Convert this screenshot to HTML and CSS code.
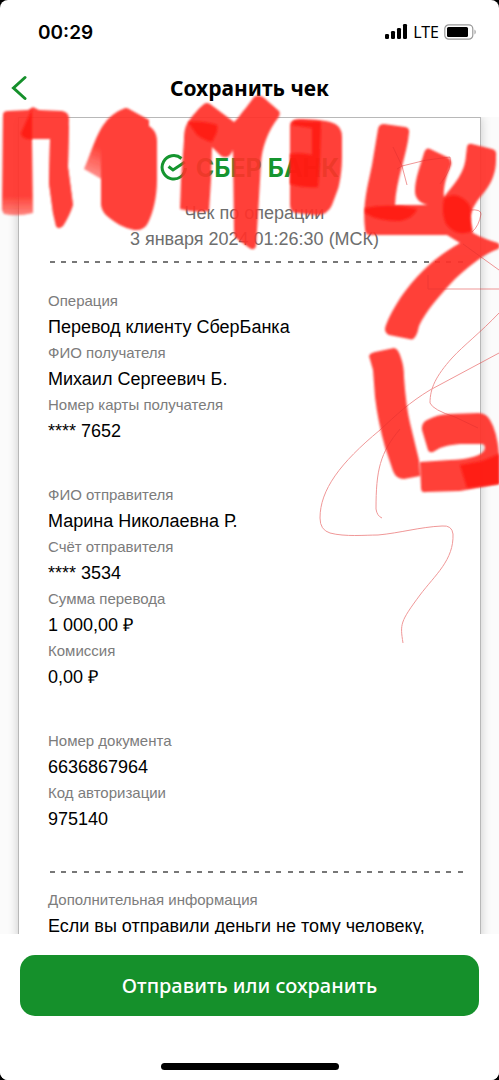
FILE: index.html
```
<!DOCTYPE html>
<html lang="ru">
<head>
  <meta charset="UTF-8">
  <meta name="viewport" content="width=device-width, initial-scale=1.0">
  <title>Сохранить чек</title>
  <link rel="stylesheet" href="styles.css">
</head>
<body>
  <div class="screen">
    <div class="statusbar">
      <span class="time">00:29</span>
      <div class="indicators">
        <svg width="23" height="16" viewBox="0 0 23 16">
          <rect x="0" y="10" width="4" height="5" rx="1.3"/>
          <rect x="6" y="7" width="4" height="8" rx="1.3"/>
          <rect x="12" y="4" width="4" height="11" rx="1.3"/>
          <rect x="18" y="0" width="4" height="15" rx="1.3"/>
        </svg>
        <span class="network">LTE</span>
        <svg width="33" height="16" viewBox="0 0 33 16">
          <rect x="0.8" y="0.8" width="28" height="14.4" rx="4" fill="none" stroke="#999" stroke-width="1.2"/>
          <rect x="3" y="3" width="21" height="10" rx="1.5"/>
          <path d="M30.5 5.5c1.6.8 1.6 4.2 0 5z" fill="#999"/>
        </svg>
      </div>
    </div>

    <header class="header">
      <button class="back" aria-label="Назад">
        <svg width="16" height="26" viewBox="0 0 16 26">
          <path d="M14 2.5 2.5 13 14 23.5" fill="none" stroke="#15902b" stroke-width="3" stroke-linecap="round"/>
        </svg>
      </button>
      <h1>Сохранить чек</h1>
    </header>

    <main class="preview">
      <article class="receipt">
        <div class="logo">
          <svg width="28" height="28" viewBox="0 0 28 28" fill="none" stroke="#15952f" stroke-width="3">
            <path d="M21.5 4.5A11.7 11.7 0 1 0 25.5 14"/>
            <path d="M8.5 12.5 13 16 25 8"/>
          </svg>
          <span>СБЕР БАНК</span>
        </div>
        <p class="caption">Чек по операции</p>
        <p class="caption">3 января 2024 01:26:30 (МСК)</p>
        <div class="divider"></div>

        <dl class="group">
          <dt>Операция</dt>
          <dd>Перевод клиенту СберБанка</dd>
          <dt>ФИО получателя</dt>
          <dd>Михаил Сергеевич Б.</dd>
          <dt>Номер карты получателя</dt>
          <dd>**** 7652</dd>
        </dl>
        <dl class="group">
          <dt>ФИО отправителя</dt>
          <dd>Марина Николаевна Р.</dd>
          <dt>Счёт отправителя</dt>
          <dd>**** 3534</dd>
          <dt>Сумма перевода</dt>
          <dd>1 000,00 ₽</dd>
          <dt>Комиссия</dt>
          <dd>0,00 ₽</dd>
        </dl>
        <dl class="group">
          <dt>Номер документа</dt>
          <dd>6636867964</dd>
          <dt>Код авторизации</dt>
          <dd>975140</dd>
        </dl>
        <div class="divider"></div>
        <dl class="group extra">
          <dt>Дополнительная информация</dt>
          <dd>Если вы отправили деньги не тому человеку,</dd>
        </dl>
      </article>
    </main>

    <footer class="footer">
      <button class="save">Отправить или сохранить</button>
      <div class="home-bar"></div>
    </footer>

    <!-- marker drawing over the receipt -->
    <svg class="marker" viewBox="0 0 499 660">
      <defs>
        <filter id="soft" x="-5%" y="-5%" width="110%" height="110%">
          <feGaussianBlur stdDeviation="0.8"/>
        </filter>
        <linearGradient id="fade" gradientUnits="userSpaceOnUse" x1="0" y1="196" x2="0" y2="217">
          <stop offset="0" stop-color="#ff3329"/>
          <stop offset="1" stop-color="#ff3329" stop-opacity="0.6"/>
        </linearGradient>
        <linearGradient id="flare" gradientUnits="userSpaceOnUse" x1="84" y1="172" x2="94" y2="145">
          <stop offset="0" stop-color="#ff3329" stop-opacity="0.6"/>
          <stop offset="1" stop-color="#ff3329"/>
        </linearGradient>
      </defs>
      <g class="ink" filter="url(#soft)">
        <path d="M3 115Q3 111 8 111L28 110 33 107 39 110 62 111Q69 112 69 119L68 167 73 205Q69 217 63 226 58 230 56 226L53 213 49 183 50 139H32L33 213Q18 217 4 214L2 210Z" fill="url(#fade)"/>
        <path d="M49 183 50 139 69 125 68 167 73 205Q69 217 63 226 58 230 56 226L53 213Z"/>
        <path d="M84 169C92 150 96 135 104 124L103 180Z" fill="url(#flare)"/>
        <path d="M103 126C108 117 117 111 123 109Q126 107 129 109L149 120V126C154 129 157 134 157 141V180C157 197 153 213 148 223Q144 231 134 230C124 228 115 223 107 216Q102 212 101 205V140Z"/>
        <path d="M188 122C193 115 199 108 204 104Q207 102 210 104L234 122C239 118 241 113 245 109L254 97Q258 94 263 97L279 111Q281 114 278 118C268 131 262 147 261 163L258 215 256 246Q254 252 248 247L236 238Q234 236 234 230L233 150C230 157 226 159 221 156L212 147 211 180 209 211Q194 213 180 209L181 180 184 140C184 132 185 127 188 122Z"/>
        <path d="M290 125Q290 120 298 119C312 119 322 120 330 122Q342 125 342 137V157C342 170 340 182 338 189L332 205Q328 215 316 215L296 213Q290 212 290 205Z"/>
        <path d="M378 129Q379 124 384 124L405 127Q410 128 409 133C407 155 396 180 395 205H428Q415 202 415 191C415 178 421 164 424 153Q426 147 430 149L449 158Q452 161 451 165C446 177 443 188 444 197C453 185 465 174 466 155L467 147Q468 143 472 144L492 149Q497 150 496 156C497 182 484 191 476 203C469 212 470 224 473 233Q484 239 498 243 501 246 498 249C485 253 468 267 455 279C439 296 426 311 419 326Q416 342 409 339L389 335Q383 332 386 325C396 300 420 265 460 243L447 235H370Q365 235 365 229C362 205 368 185 372 165Z"/>
        <path d="M369 356Q370 353 375 352L394 348Q398 348 401 358 404 366 404 377 406 406 410 423L419 460 420 476 404 479Q396 479 393 471L385 447Q378 422 375 397L373 370Z"/>
        <path fill-rule="evenodd" d="M422 430Q421 423 427 420 438 414 450 414L479 413Q487 414 490 420 497 431 499 454V484L460 491 426 492Q421 493 421 488L420 462 450 460Q475 459 483 452 487 447 483 444L460 444Q447 445 440 448L433 452Q429 453 428 450Z"/>
      </g>
      <g class="deep" filter="url(#soft)">
        <path d="M21 133 32 109 32 139Q22 140 21 133Z"/>
        <path d="M188 122Q202 120 217 125 219 130 212 142 206 141 197 135Z"/>
        <path d="M290 154Q300 152 312 155V128L292 125 294 121 321 122 320 160 318 187Q303 188 290 184Z"/>
        <path d="M365 208Q390 203 417 209 414 218 400 221 377 221 365 213Z"/>
        <path d="M444 199Q454 191 465 200 473 207 470 215L472 231Q457 238 446 224 441 212 444 199Z"/>
        <path d="M460 465 482 461 499 454V484L467 488Z"/>
      </g>
      <g class="hairlines">
        <path d="M393 147 402 166 407 185M397 169 402 166Q425 159 450 157 453 168 440 184M470 210Q481 209 481 214 479 226 472 232M463 244 499 270M428 275 428 289H499"/>
        <path d="M499 313C480 333 464 345 452 358C436 376 430 388 430 403Q433 410 455 417L478 428"/>
        <path d="M499 353 430 390C410 402 396 415 380 430C340 463 320 490 320 518Q320 530 330 533C345 537 365 535 378 535C400 533 420 527 442 526Q452 525 453 534C454 560 435 575 420 595C400 622 400 624 403 643"/>
        <path d="M400 429C380 453 376 470 376 509Q377 516 382 518"/>
      </g>
    </svg>
  </div>
</body>
</html>
```
FILE: styles.css
```
* {
  box-sizing: border-box;
}
body {
  margin: 0;
  background: #000;
  color: #000;
  font-family: "Liberation Sans", Arial, sans-serif;
}
button {
  border: none;
  padding: 0;
  cursor: pointer;
}
.screen {
  position: relative;
  display: flex;
  flex-direction: column;
  height: 100vh;
  background: #fff;
  border-radius: 8px;
  overflow: hidden;
}

/* status bar */
.statusbar {
  display: flex;
  justify-content: space-between;
  align-items: center;
  height: 64px;
  padding: 0 22px 0 38px;
  flex-shrink: 0;
}
.time {
  font: 600 19px Inter, sans-serif;
}
.indicators {
  display: flex;
  align-items: center;
  gap: 5px;
}
.network {
  font: 400 16px "Noto Sans", sans-serif;
}

/* header */
.header {
  display: grid;
  grid-template-columns: 40px 1fr 40px;
  align-items: center;
  height: 53px;
  padding-bottom: 5px;
  flex-shrink: 0;
}
.back {
  display: flex;
  padding-left: 11px;
  background: none;
}
.header h1 {
  margin: 0;
  text-align: center;
  font: 700 21px "Noto Sans", sans-serif;
}

/* receipt */
.preview {
  flex: 1;
  min-height: 0;
  overflow: hidden;
  padding: 0 18px;
  background: #fbfbfb;
}
.receipt {
  min-height: 100%;
  padding: 32px 17px 0 29px;
  background: #fff;
  border: 1px solid #b8b8b8;
  box-shadow: 0 0 10px rgba(0, 0, 0, 0.2);
}
.logo {
  display: flex;
  justify-content: center;
  align-items: center;
  gap: 8px;
  height: 36px;
  margin-bottom: 14px;
  padding-right: 12px;
  color: #15952f;
  font: 700 25px Inter, sans-serif;
}
.caption {
  margin: 0;
  padding-right: 2px;
  text-align: center;
  font-size: 18px;
  line-height: 26px;
  color: #6e6e6e;
}
.divider {
  height: 2px;
  margin: 9px 0 26px 2px;
  background: repeating-linear-gradient(90deg, #777 0 5px, transparent 5px 11px, #777 11px 16px, transparent 16px 22px, #777 22px 27px, transparent 27px 34px);
}
.group {
  margin: 0 0 38px;
}
.group dt {
  font-size: 15px;
  line-height: 24px;
  color: #7c7c7c;
}
.group dd {
  margin: 0;
  font-size: 18px;
  line-height: 28px;
  white-space: nowrap;
}
.group + .divider {
  margin-bottom: 15px;
}
.extra {
  margin: 0;
}

/* bottom */
.footer {
  display: flex;
  flex-direction: column;
  align-items: center;
  justify-content: space-between;
  height: 146px;
  padding: 21px 20px 10px;
  background: #fff;
  flex-shrink: 0;
}
.save {
  width: 100%;
  height: 61px;
  border-radius: 15px;
  background: #15902b;
  color: #fff;
  font: 500 20px "Noto Sans", sans-serif;
}
.home-bar {
  width: 178px;
  height: 7px;
  border-radius: 4px;
  background: #000;
}

/* drawing */
.marker {
  position: absolute;
  top: 0;
  left: 0;
  width: 100%;
  pointer-events: none;
}
.ink {
  fill: #ff3329;
  opacity: 0.93;
}
.deep {
  fill: #ff150d;
  opacity: 0.8;
}
.hairlines {
  fill: none;
  stroke: #e03030;
  stroke-width: 1;
  opacity: 0.5;
}
```
